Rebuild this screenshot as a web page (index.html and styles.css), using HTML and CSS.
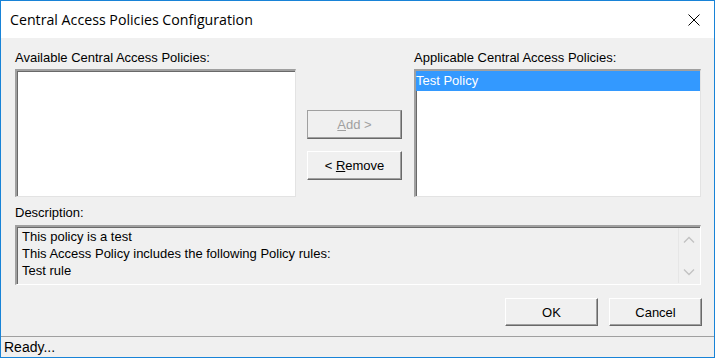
FILE: index.html
```html
<!DOCTYPE html>
<html lang="en">
<head>
    <meta charset="UTF-8">
    <title>Central Access Policies Configuration</title>
    <link rel="stylesheet" href="styles.css">
</head>
<body>
    <div class="window">
        <div class="titlebar">
            <span class="title">Central Access Policies Configuration</span>
            <svg class="close" width="12" height="12" viewBox="0 0 12 12">
                <path d="M0.5 0.5 L11.5 11.5 M11.5 0.5 L0.5 11.5" stroke="#000" stroke-width="1" fill="none"/>
            </svg>
        </div>

        <div class="content">
            <div class="lists">
                <div class="col col-left">
                    <div class="label">Available Central Access Policies:</div>
                    <div class="listbox"></div>
                </div>
                <div class="middle">
                    <button class="btn" disabled><u>A</u>dd &gt;</button>
                    <button class="btn">&lt; <u>R</u>emove</button>
                </div>
                <div class="col col-right">
                    <div class="label">Applicable Central Access Policies:</div>
                    <div class="listbox">
                        <div class="item selected">Test Policy</div>
                    </div>
                </div>
            </div>

            <div class="label desc-label">Description:</div>
            <div class="desc">
                <div class="desc-text">
                    This policy is a test<br>
                    This Access Policy includes the following Policy rules:<br>
                    Test rule
                </div>
                <div class="scroll">
                    <svg width="12" height="8" viewBox="0 0 12 8"><path d="M1 6.5 L6 1.5 L11 6.5" stroke="#c2c2c2" stroke-width="1.3" fill="none"/></svg>
                    <svg width="12" height="8" viewBox="0 0 12 8"><path d="M1 1.5 L6 6.5 L11 1.5" stroke="#c2c2c2" stroke-width="1.3" fill="none"/></svg>
                </div>
            </div>

            <div class="actions">
                <button class="btn btn-ok">OK</button>
                <button class="btn btn-cancel">Cancel</button>
            </div>
        </div>

        <div class="status">Ready...</div>
    </div>
</body>
</html>
```

FILE: styles.css
```css
body {
    margin: 0;
    font-family: 'Liberation Sans', Arial, sans-serif;
    font-size: 13px;
    color: #000;
}

.window {
    width: 715px;
    height: 358px;
    box-sizing: border-box;
    border: 1px solid #1883d7; /* borde azul de Windows */
    background-color: #f0f0f0;
    display: flex;
    flex-direction: column;
}

.titlebar {
    height: 37px;
    background-color: #fff;
    display: flex;
    align-items: center;
    justify-content: space-between;
    padding: 0 14px 0 9px;
}

.title {
    font-family: 'Open Sans', sans-serif;
    font-size: 14.2px;
    margin-top: -1px;
}

.close {
    margin-top: 1px;
}

.content {
    flex: 1;
    padding: 12px 13px 0 14px;
}

.lists {
    display: flex;
}

.label {
    line-height: 16px;
    margin-bottom: 3px;
}

.col-left {
    width: 281px;
}

.col-right {
    width: 287px;
}

.listbox {
    height: 128px;
    box-sizing: border-box;
    background-color: #fff;
    border-top: 2px solid #a0a0a0;
    border-left: 2px solid #a0a0a0;
    border-right: 1px solid #e3e3e3;
    border-bottom: 1px solid #e3e3e3;
    box-shadow: inset 1px 1px 0 #696969;
}

.item {
    height: 20px;
    line-height: 20px;
    padding-left: 0;
}

.item.selected {
    background-color: #3399ff;
    color: #fff;
}

.middle {
    width: 95px;
    margin: 0 12px 0 11px;
    padding-top: 60px;
    display: flex;
    flex-direction: column;
    gap: 12px;
}

.btn {
    font-family: 'Liberation Sans', Arial, sans-serif;
    font-size: 13px;
    color: #000;
    background-color: #f0f0f0;
    height: 29px;
    padding: 0;
    border: 1px solid;
    border-color: #fff #696969 #696969 #fff;
    box-shadow: inset -1px -1px 0 #a0a0a0;
}

.btn:disabled {
    color: #a0a0a0;
    border-color: #a0a0a0 #696969 #696969 #a0a0a0;
}

.desc-label {
    margin-top: 8px;
    margin-bottom: 4px;
}

.desc {
    height: 60px;
    box-sizing: border-box;
    border-top: 2px solid #a0a0a0;
    border-left: 2px solid #a0a0a0;
    border-right: 1px solid #fff;
    border-bottom: 1px solid #fff;
    box-shadow: inset 1px 1px 0 #696969;
    display: flex;
}

.desc-text {
    flex: 1;
    padding: 1px 0 0 5px;
    line-height: 17px;
}

.scroll {
    width: 20px;
    margin: 1px 1px 1px 0;
    border-left: 1px solid #e6e6e6;
    display: flex;
    flex-direction: column;
    justify-content: space-between;
    align-items: center;
    padding: 8px 0 7px;
}

.actions {
    display: flex;
    justify-content: flex-end;
    gap: 11px;
    margin-top: 13px;
}

.btn-ok,
.btn-cancel {
    height: 28px;
    width: 93px;
}

.btn-cancel {
    margin-right: -1px;
}

.status {
    height: 20px;
    line-height: 20px;
    border-top: 1px solid #a0a0a0;
    padding-left: 3px;
    font-size: 14px;
    margin-top: 10px;
}
```
